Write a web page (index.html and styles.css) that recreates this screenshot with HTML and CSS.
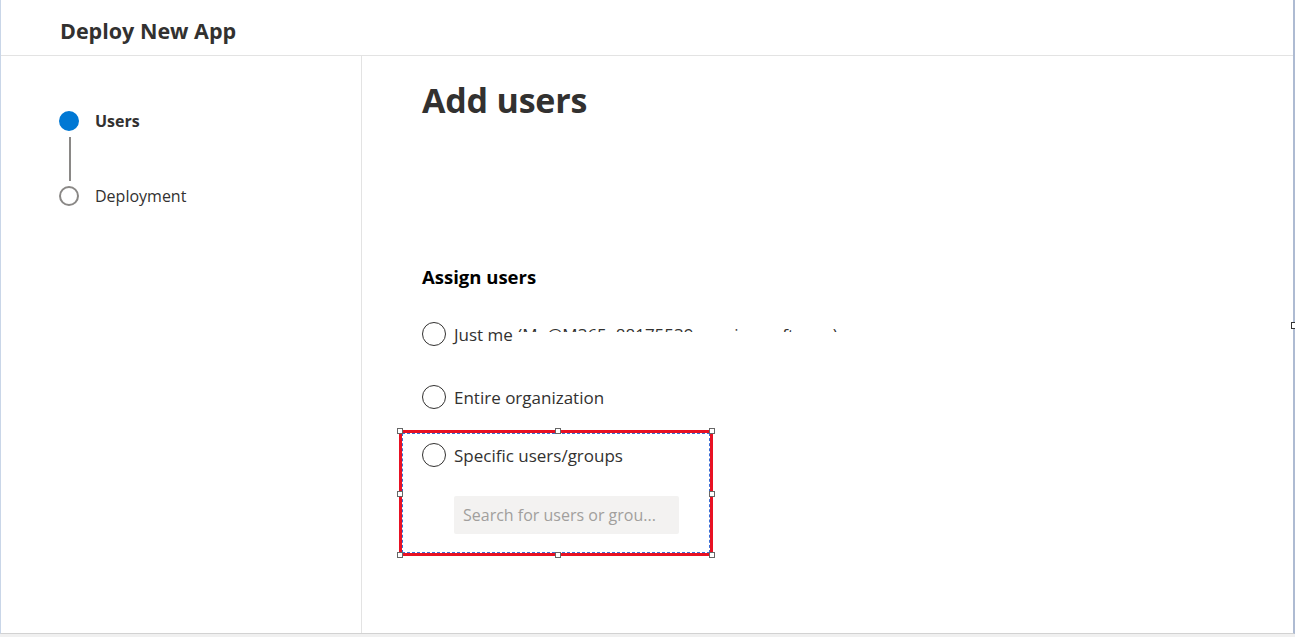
FILE: index.html
```html
<!DOCTYPE html>
<html lang="en">
    <head>
        <title>Deploy New App</title>
        <link rel="stylesheet" href="styles.css">
    </head>
    <body>
        <div class="frame">
            <header class="panel-header">
                <h1>Deploy New App</h1>
            </header>
            <div class="panel-body">
                <nav class="steps">
                    <div class="step active">
                        <span class="step-dot"></span>
                        <span class="step-name">Users</span>
                    </div>
                    <div class="step-line"></div>
                    <div class="step">
                        <span class="step-dot"></span>
                        <span class="step-name">Deployment</span>
                    </div>
                </nav>
                <main class="content">
                    <h2 class="page-title">Add users</h2>
                    <h3 class="section-title">Assign users</h3>
                    <div class="options">
                        <label class="option">
                            <span class="radio"></span>
                            <span class="option-text">Just me <span class="hidden-mail">(Me@M365x88175539.onmicrosoft.com)</span></span>
                        </label>
                        <label class="option">
                            <span class="radio"></span>
                            <span class="option-text">Entire organization</span>
                        </label>
                        <div class="selected-block">
                            <div class="dash"></div>
                            <span class="handle h-tl"></span>
                            <span class="handle h-tm"></span>
                            <span class="handle h-tr"></span>
                            <span class="handle h-ml"></span>
                            <span class="handle h-mr"></span>
                            <span class="handle h-bl"></span>
                            <span class="handle h-bm"></span>
                            <span class="handle h-br"></span>
                            <label class="option">
                                <span class="radio"></span>
                                <span class="option-text">Specific users/groups</span>
                            </label>
                            <div class="search">Search for users or grou...</div>
                        </div>
                    </div>
                </main>
                <div class="edge-mark"></div>
            </div>
        </div>
        <div class="bottom-strip"></div>
    </body>
</html>
```

FILE: styles.css
```css
body {
    margin: 0;
    padding: 0;
    height: 637px;
    overflow: hidden;
    background: #f0f0f0;
    font-family: "Open Sans", "Noto Sans", sans-serif;
    color: #323130;
    display: flex;
    flex-direction: column;
}

.frame {
    height: 633px;
    background: white;
    border-left: 1px solid #c9d6e8;
    border-right: 2px solid #aebbd2;
    border-bottom: 1px solid #d2d2d2;
    display: flex;
    flex-direction: column;
}

.panel-header {
    height: 55px;
    border-bottom: 1px solid #e3e3e3;
    display: flex;
    align-items: center;
    padding-left: 59px;
    flex-shrink: 0;
}

.panel-header h1 {
    margin: 0;
    font-size: 21.5px;
    font-weight: 700;
    color: #323130;
    padding-top: 6px;
}

.panel-body {
    flex: 1;
    display: flex;
    position: relative;
}

.steps {
    width: 361px;
    border-right: 1px solid #e3e3e3;
    padding: 54px 0 0 58px;
    box-sizing: border-box;
    flex-shrink: 0;
}

.step {
    display: flex;
    align-items: center;
    height: 22px;
}

.step-dot {
    width: 16px;
    height: 16px;
    border-radius: 50%;
    border: 2px solid #8a8886;
    background: white;
}

.step.active .step-dot {
    background: #0078d4;
    border-color: #0078d4;
}

.step-name {
    margin-left: 16px;
    font-size: 16px;
    color: #323130;
}

.step.active .step-name {
    font-weight: 700;
}

.step-line {
    width: 2px;
    height: 44px;
    margin: 5px 0 4px 10px;
    background: #8a8886;
}

.content {
    flex: 1;
    padding: 21px 0 0 60px;
}

.page-title {
    margin: 0;
    font-size: 34px;
    font-weight: 700;
    color: #323130;
    letter-spacing: -0.2px;
}

.section-title {
    margin: 141px 0 0;
    font-size: 18.5px;
    font-weight: 700;
    color: #000;
}

.options {
    display: flex;
    flex-direction: column;
    margin-top: 32px;
}

.option {
    display: flex;
    align-items: center;
    height: 26px;
    margin-bottom: 37px;
}

.radio {
    width: 22px;
    height: 22px;
    border: 1px solid #323130;
    border-radius: 50%;
    flex-shrink: 0;
}

.option-text {
    margin-left: 8px;
    font-size: 17px;
    color: #323130;
    white-space: nowrap;
}

.hidden-mail {
    display: inline-block;
    vertical-align: top;
    height: 9px;
    overflow: hidden;
}

.selected-block {
    position: relative;
    width: 312px;
    height: 124px;
    margin: -16px 0 0 -22px;
    padding: 9px 0 0 20px;
    box-sizing: border-box;
    border: 2px solid #e81123;
    outline: 1px solid #e81123;
}

.selected-block .option {
    margin-bottom: 0;
}

.dash {
    position: absolute;
    inset: 0;
    border: 1px dashed #ffffff;
    outline: 1px dashed #3b6fd4;
    outline-offset: -1px;
}

.handle {
    position: absolute;
    width: 4px;
    height: 4px;
    background: white;
    border: 1px solid #666;
}

.h-tl { left: -5px; top: -5px; }
.h-tm { left: 153px; top: -5px; }
.h-tr { right: -5px; top: -5px; }
.h-ml { left: -5px; top: 58px; }
.h-mr { right: -5px; top: 58px; }
.h-bl { left: -5px; bottom: -5px; }
.h-bm { left: 153px; bottom: -5px; }
.h-br { right: -5px; bottom: -5px; }

.search {
    margin: 28px 0 0 32px;
    width: 225px;
    height: 38px;
    background: #f3f2f1;
    border-radius: 2px;
    color: #a19f9d;
    font-size: 16px;
    line-height: 38px;
    padding-left: 9px;
    box-sizing: border-box;
}

.edge-mark {
    position: absolute;
    right: -2px;
    top: 266px;
    width: 3px;
    height: 5px;
    border: 1px solid #333;
    border-right: none;
    background: white;
}

.bottom-strip {
    flex: 1;
    background: #f0f0f0;
}
```
